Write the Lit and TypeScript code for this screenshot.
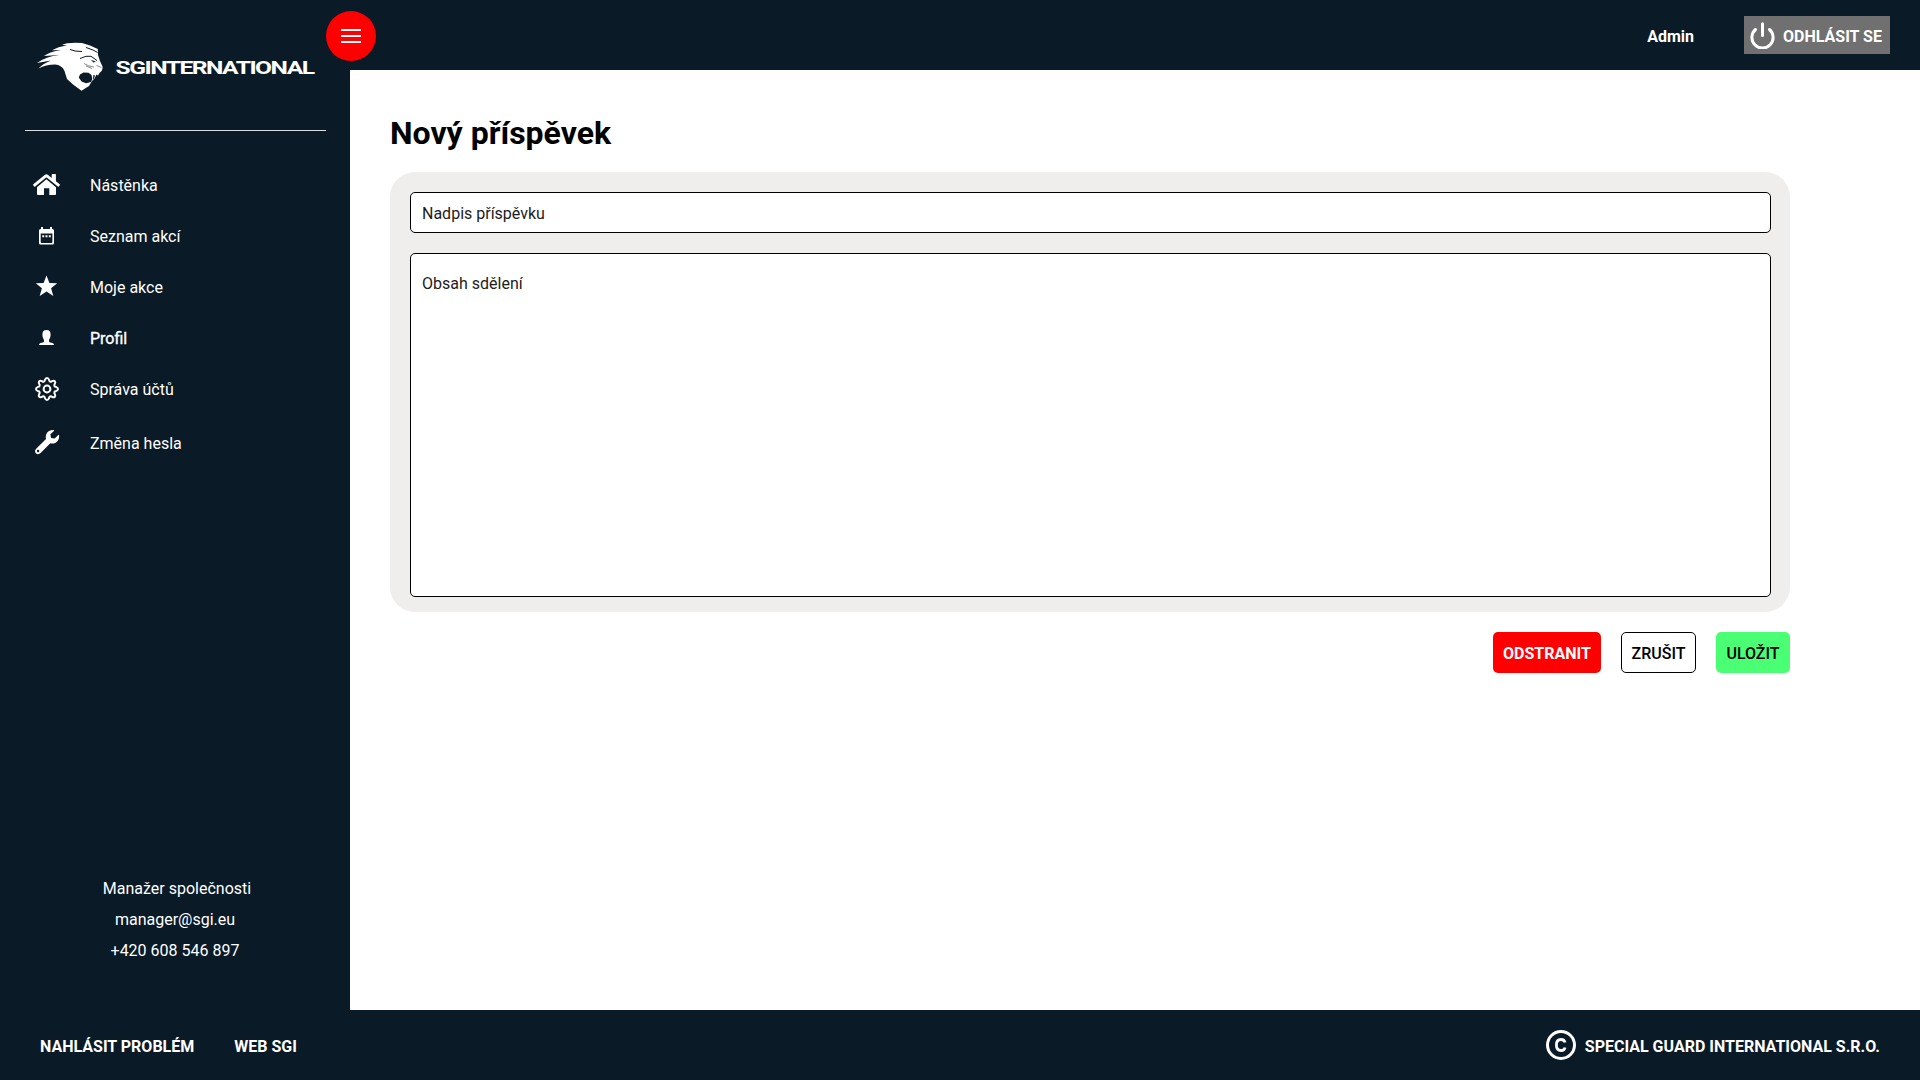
import { LitElement, html, css, svg } from "lit";
import { customElement } from "lit/decorators.js";

const icons = {
  home: svg`<svg class="icon" width="29" height="29" viewBox="0 0 29 29" fill="#fff">
    <path d="M1.300 14.200 13 4.700q1.400-1.100 2.800 0l3.900 3.200V4.600q0-.6.600-.6h3q.600 0 .600.600V11.200L27.700 14.200q.5.500.1 1l-1 1.200q-.5.500-1 .1L15 7.700q-.6-.4-1.200 0L3.200 16.500q-.5.400-1-.1l-1-1.200q-.4-.5.100-1z"/>
    <path d="M14.400 9.300 24 17.200V24q0 1-1 1H17.300V18.200H12V25H6q-1 0-1-1V17.200z"/></svg>`,
  calendar: svg`<svg class="icon" width="29" height="29" viewBox="0 0 29 29" fill="#fff">
    <path fill-rule="evenodd" d="M9 6h2v2h7V6h2v2h.500q1.500 0 1.500 1.500V22q0 1.500-1.500 1.500H8.500Q7 23.500 7 22V9.500Q7 8 8.500 8H9zM8.700 12.500V21q0 1 1 1H19.400q1 0 1-1V12.500z"/>
    <path d="M10.200 14.300h2v2h-2zM13.500 14.300h2v2h-2zM16.800 14.300h2v2h-2z"/></svg>`,
  star: svg`<svg class="icon" width="29" height="29" viewBox="0 0 29 29" fill="#fff">
    <path d="M14.500 3.600 17.400 11 25.200 11.200 19.100 16.200 21.300 24 14.500 19.600 7.700 24 9.900 16.200 3.800 11.200 11.600 11z"/></svg>`,
  user: svg`<svg class="icon" width="29" height="29" viewBox="0 0 29 29" fill="#fff">
    <path d="M14.500 7C17.300 7 18.600 8.500 18.600 11.200 18.600 13.700 17.900 15.500 17 16.900V18.300C17 19.300 17.800 19.400 19.300 19.700 21 20.100 22 20.600 22 22H7C7 20.600 8 20.100 9.700 19.700 11.200 19.400 12 19.300 12 18.300V16.900C11.100 15.500 10.400 13.700 10.400 11.200 10.400 8.500 11.700 7 14.500 7z"/></svg>`,
  gear: svg`<svg class="icon" width="29" height="29" viewBox="-15 -15 29 29" fill="none" stroke="#fff" stroke-width="2" stroke-linejoin="round">
    <circle r="3.400"/>
    <path d="M-2.300-8.400C-1.800-9.800-1.700-11 0-11S1.800-9.800 2.300-8.400C2.700-7.400 3.600-7.100 4.500-7.500C5.800-8.100 6.600-8.900 7.800-7.800S8.100-5.800 7.500-4.500C7.100-3.600 7.400-2.700 8.400-2.300C9.800-1.800 11-1.700 11 0S9.800 1.800 8.400 2.300C7.400 2.700 7.100 3.600 7.500 4.500C8.100 5.800 8.900 6.600 7.800 7.800S5.800 8.100 4.500 7.500C3.600 7.100 2.700 7.400 2.300 8.400C1.800 9.800 1.700 11 0 11S-1.800 9.800-2.300 8.400C-2.700 7.400-3.600 7.100-4.500 7.500C-5.800 8.100-6.600 8.900-7.800 7.800S-8.100 5.800-7.500 4.500C-7.100 3.600-7.400 2.700-8.400 2.300C-9.800 1.800-11 1.700-11 0S-9.800-1.800-8.400-2.300C-7.400-2.700-7.100-3.600-7.500-4.500C-8.100-5.800-8.900-6.600-7.800-7.800S-5.800-8.100-4.500-7.500C-3.600-7.100-2.700-7.400-2.300-8.400Z"/></svg>`,
  wrench: svg`<svg class="icon" width="29" height="29" viewBox="0 0 29 29" fill="#fff">
    <path fill-rule="evenodd" d="M26.300 7Q27 6.400 27.100 7.400C27.700 12.500 23.400 16.500 18.300 15.200L8.600 25C6.900 26.600 5 26.400 3.900 25.200 2.700 24 2.700 22.200 4.200 20.700L14 10.900C12.800 5.800 16.500 1.700 21.600 2.100Q22.600 2.200 21.900 2.900L18.400 6.300 19 10 22.700 10.600zM7.300 23a1.200 1.200 0 1 0-2.400 0 1.200 1.200 0 0 0 2.400 0z"/></svg>`,
};

const menu = [
  { key: "home", label: "Nástěnka" },
  { key: "calendar", label: "Seznam akcí" },
  { key: "star", label: "Moje akce" },
  { key: "user", label: "Profil", active: true },
  { key: "gear", label: "Správa účtů" },
  { key: "wrench", label: "Změna hesla", last: true },
] as { key: keyof typeof icons; label: string; active?: boolean; last?: boolean }[];

@customElement("app-root")
export class AppRoot extends LitElement {
  static styles = css`
    :host {
      display: grid;
      grid-template: 70px 1fr 70px / 350px 1fr;
      width: 100%;
      height: 100vh;
      position: relative;
      overflow: hidden;
      background: #0a1a26;
      color: #fff;
      font: 400 16px/19px Roboto, "Liberation Sans", sans-serif;
    }
    * { box-sizing: border-box; }
    svg { display: block; flex: none; }
    .sidebar {
      grid-area: 1 / 1 / 3 / 2;
      display: flex;
      flex-direction: column;
      padding: 0 24px 0 25px;
    }
    .brand {
      height: 131px;
      padding-top: 38px;
      border-bottom: 1px solid #d9dcde;
    }
    .wordmark {
      font-family: Roboto, "Liberation Sans", sans-serif;
      font-size: 18px;
      font-weight: 700;
      letter-spacing: -1.1px;
    }
    .menu {
      list-style: none;
      margin: 0;
      padding: 28px 0 0 7px;
    }
    .item {
      display: flex;
      align-items: center;
      gap: 29px;
      height: 51px;
    }
    .item span { padding-top: 2px; }
    .item.active { -webkit-text-stroke: 0.35px #fff; }
    .item.last { margin-top: 3px; }
    .contact {
      margin-top: auto;
      padding: 0 0 44px;
      text-align: center;
      line-height: 31px;
    }
    .contact div { padding-right: 1px; }
    .contact div:first-child { padding-left: 3px; padding-right: 0; }
    .toggle {
      position: absolute;
      left: 326px;
      top: 11px;
      width: 50px;
      height: 50px;
      padding: 0;
      border: 0;
      border-radius: 50%;
      background: #f00;
    }
    .topbar {
      display: flex;
      align-items: center;
      justify-content: flex-end;
      gap: 50px;
      padding: 0 30px 0 0;
      font-weight: 700;
    }
    .user { padding-top: 2px; }
    .logout {
      display: flex;
      align-items: center;
      height: 38px;
      width: 146px;
      padding: 2px 0 0 6px;
      gap: 8px;
      border: 0;
      background: #707070;
      color: #fff;
      font: inherit;
      white-space: nowrap;
    }
    .logout svg { margin-top: -2px; }
    .main {
      background: #fff;
      color: #000;
      padding: 44px 130px 0 40px;
    }
    h1 {
      margin: 0;
      font-size: 32px;
      line-height: 38px;
      font-weight: 700;
    }
    .panel {
      display: flex;
      flex-direction: column;
      gap: 20px;
      height: 440px;
      margin-top: 20px;
      padding: 20px 19px 15px 20px;
      border-radius: 25px;
      background: #efeeec;
    }
    .field {
      display: block;
      width: 100%;
      margin: 0;
      border: 1px solid #000;
      border-radius: 5px;
      background: #fff;
      color: #000;
      font: inherit;
      font-weight: 400;
      resize: none;
      outline: 0;
    }
    .field::placeholder { color: #1c1c1c; opacity: 1; }
    .title { height: 41px; padding: 2px 11px 0; }
    .body { flex: 1; padding: 20px 11px; }
    .actions {
      display: flex;
      justify-content: flex-end;
      gap: 20px;
      margin-top: 20px;
    }
    .btn {
      height: 41px;
      padding: 2px 0 0;
      border: 1px solid transparent;
      border-radius: 5px;
      font: inherit;
      font-weight: 500;
      color: #000;
    }
    .delete { width: 108px; background: #f00; color: #fff; font-weight: 700; }
    .cancel { width: 75px; background: #fff; border-color: #000; }
    .save { width: 74px; background: #4bff74; }
    .footer {
      grid-column: 1 / 3;
      display: flex;
      align-items: center;
      gap: 40px;
      padding: 0 40px;
      font-weight: 700;
    }
    .footer span { padding-top: 2px; }
    .copy {
      display: flex;
      align-items: center;
      gap: 9px;
      margin-left: auto;
    }
  `;

  render() {
    return html`
      <aside class="sidebar">
        <div class="brand">
          <svg width="300" height="60" viewBox="25 38 300 60">
            <path fill="#fff" d="M62 44.800 67 43.200Q74 42.500 82 43L90 45.500 97.800 49 98 55 100 61 102.700 67 102 70.500 99.500 73 98 75.500 96.500 74.500 94.500 78.500 92 81 89 86 81.500 90.700 73 84.500 67 79 64.500 71Q62 65 55 64.500 46 64.500 38.500 68.500 43 63.500 51 60.500L37 63Q46 56.500 59 55L44 56Q50 51.500 61 50L52 50.300Q58 46.500 67 45.700z"/>
            <path fill="#0a1a26" d="M78.800 77.500 80 74.500 83.500 72.500 88.500 72.800 91.500 75 92.300 79 91 82 86 83.300 81.500 81.500zM93.300 75 95 75.500 94 78.500 93 79.500zM91 60 96 61.500 93.500 62.500z"/>
            <path fill="none" stroke="#0a1a26" d="M70 49.500 75 51 82 51.500M86 47.500 93 50 97.500 52.500M80 58.500 86 56.300 91 56.300 97 60.500"/>
            <path fill="none" stroke="#0a1a26" stroke-width=".5" d="M84 63.500 89 66 94 67M86 66 92 68.500M96.500 65.500 101.500 67.500"/>
            <text class="wordmark" x="115.500" y="74" textLength="198" lengthAdjust="spacingAndGlyphs" fill="#fff">SGINTERNATIONAL</text>
          </svg>
        </div>
        <ul class="menu">
          ${menu.map(
            (m) => html`<li class="item ${m.active ? "active" : ""} ${m.last ? "last" : ""}">
              ${icons[m.key]}<span>${m.label}</span>
            </li>`
          )}
        </ul>
        <div class="contact">
          <div>Manažer společnosti</div>
          <div>manager@sgi.eu</div>
          <div>+420 608 546 897</div>
        </div>
      </aside>
      <header class="topbar">
        <span class="user">Admin</span>
        <button class="logout">
          <svg width="25" height="28" viewBox="0 0 25 28" fill="none" stroke="#fff" stroke-width="3" stroke-linecap="round">
            <path d="M12.500 2.800V14.500M5.500 8.500A10.600 10.600 0 1 0 19.500 8.500"/>
          </svg>
          <span>ODHLÁSIT SE</span>
        </button>
      </header>
      <main class="main">
        <h1>Nový příspěvek</h1>
        <section class="panel">
          <input class="field title" placeholder="Nadpis příspěvku" />
          <textarea class="field body" placeholder="Obsah sdělení"></textarea>
        </section>
        <div class="actions">
          <button class="btn delete">ODSTRANIT</button>
          <button class="btn cancel">ZRUŠIT</button>
          <button class="btn save">ULOŽIT</button>
        </div>
      </main>
      <footer class="footer">
        <span>NAHLÁSIT PROBLÉM</span>
        <span>WEB SGI</span>
        <div class="copy">
          <svg width="30" height="30" viewBox="0 0 30 30" fill="none" stroke="#fff">
            <circle cx="15" cy="15" r="13.500" stroke-width="3"/>
            <path stroke-width="2.800" d="M19 12.600C18.600 10.400 17.200 9.500 15 9.500 12 9.500 10.400 11.500 10.400 15S12 20.500 15 20.500C17.200 20.500 18.600 19.600 19 17.400"/>
          </svg>
          <span>SPECIAL GUARD INTERNATIONAL S.R.O.</span>
        </div>
      </footer>
      <button class="toggle">
        <svg width="50" height="50" viewBox="0 0 50 50" fill="#fff">
          <path d="M15 18h20v2H15zM15 24h20v2H15zM15 30h20v2H15z"/>
        </svg>
      </button>
    `;
  }
}
